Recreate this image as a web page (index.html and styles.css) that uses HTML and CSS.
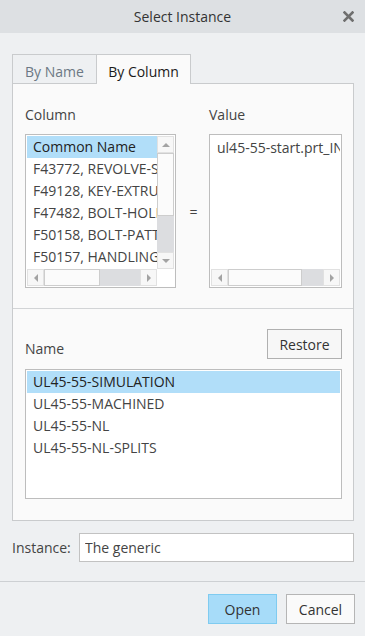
FILE: index.html
```html
<!DOCTYPE html>
<html lang="en">
<head>
  <meta charset="UTF-8">
  <meta name="viewport" content="width=device-width, initial-scale=1.0">
  <title>Select Instance</title>
  <link rel="stylesheet" href="styles.css">
</head>
<body>
  <div class="titlebar">
    <span class="title">Select Instance</span>
    <span class="close">
      <svg width="11" height="11" viewBox="0 0 11 11">
        <path d="M1.5 1.5 L9.5 9.5 M9.5 1.5 L1.5 9.5" stroke="#6f6f6f" stroke-width="2.6" stroke-linecap="square"/>
      </svg>
    </span>
  </div>

  <div class="main">
    <div class="tabs">
      <div class="tab">By Name</div>
      <div class="tab tab-active">By Column</div>
    </div>

    <div class="panel">
      <!-- Column / Value -->
      <div class="cols">
        <div class="label">Column</div>
        <div></div>
        <div class="label">Value</div>

        <div class="listbox scroll-both">
          <ul class="items">
            <li class="item selected">Common Name</li>
            <li class="item">F43772, REVOLVE-SHAFT</li>
            <li class="item">F49128, KEY-EXTRUDE</li>
            <li class="item">F47482, BOLT-HOLE</li>
            <li class="item">F50158, BOLT-PATTERN</li>
            <li class="item">F50157, HANDLING</li>
          </ul>
          <div class="vscroll">
            <div class="arrow"><span class="tri tri-up"></span></div>
            <div class="thumb-v"></div>
            <div class="track"></div>
            <div class="arrow"><span class="tri tri-down"></span></div>
          </div>
          <div class="hscroll">
            <div class="arrow"><span class="tri tri-left"></span></div>
            <div class="thumb-h thumb-col"></div>
            <div class="track"></div>
            <div class="arrow"><span class="tri tri-right"></span></div>
          </div>
          <div class="corner"></div>
        </div>

        <div class="equals">=</div>

        <div class="listbox scroll-h">
          <ul class="items">
            <li class="item value-text">ul45-55-start.prt_INST</li>
          </ul>
          <div class="hscroll">
            <div class="arrow"><span class="tri tri-left"></span></div>
            <div class="thumb-h thumb-val"></div>
            <div class="track"></div>
            <div class="arrow"><span class="tri tri-right"></span></div>
          </div>
        </div>
      </div>

      <!-- Name -->
      <div class="names">
        <div class="names-head">
          <div class="label">Name</div>
          <button class="btn btn-restore" type="button">Restore</button>
        </div>
        <ul class="listbox name-list">
          <li class="item selected">UL45-55-SIMULATION</li>
          <li class="item">UL45-55-MACHINED</li>
          <li class="item">UL45-55-NL</li>
          <li class="item">UL45-55-NL-SPLITS</li>
        </ul>
      </div>
    </div>

    <div class="instance-row">
      <label class="instance-label" for="instance">Instance:</label>
      <input class="instance-input" id="instance" type="text" value="The generic">
    </div>
  </div>

  <div class="footer">
    <button class="btn btn-open" type="button">Open</button>
    <button class="btn" type="button">Cancel</button>
  </div>
</body>
</html>
```

FILE: styles.css
```css
* {
  margin: 0;
  padding: 0;
  box-sizing: border-box;
}
body {
  width: 365px;
  height: 636px;
  overflow: hidden;
  background: #eef0f2;
  font-family: "Open Sans", "Noto Sans", sans-serif;
  font-size: 14px;
  color: #333;
}
ul {
  list-style: none;
}

/* Barra de título */
.titlebar {
  height: 33px;
  background: #dde0e3;
  display: grid;
  grid-template-columns: 1fr auto 1fr;
  align-items: center;
}
.title {
  grid-column: 2;
  color: #333;
}
.close {
  justify-self: end;
  margin-right: 11px;
  display: flex;
}

.main {
  padding: 21px 11px 0 12px;
}

/* Abas */
.tabs {
  display: flex;
  height: 29px;
  position: relative;
  z-index: 1;
}
.tab {
  width: 85px;
  height: 29px;
  border: 1px solid #c9cbcd;
  border-bottom: none;
  background: #eef0f2;
  color: #6c7884;
  display: flex;
  justify-content: center;
  align-items: center;
  padding-top: 4px;
}
.tab-active {
  width: 94px;
  height: 30px;
  border-left: none;
  background: #fafafa;
  color: #1a1a1a;
}

.panel {
  border: 1px solid #c9cbcd;
  background: #fafafa;
  width: 342px;
}
.label {
  line-height: 20px;
  color: #444;
}

/* Coluna / Valor */
.cols {
  display: grid;
  grid-template-columns: 151px 33px 133px;
  grid-template-rows: 20px 154px;
  row-gap: 9px;
  padding: 21px 0 20px 12px;
  border-bottom: 1px solid #d2d4d6;
}
.equals {
  display: flex;
  justify-content: center;
  align-items: center;
  padding-left: 2px;
  color: #444;
}
.listbox {
  border: 1px solid #bdbdbd;
  background: #fff;
  padding: 1px;
}
.scroll-both {
  display: grid;
  grid-template-columns: 1fr 17px;
  grid-template-rows: 1fr 17px;
}
.scroll-h {
  display: grid;
  grid-template-rows: 1fr 17px;
}
.items {
  overflow: hidden;
}
.item {
  height: 22px;
  line-height: 22px;
  padding-left: 6px;
  white-space: nowrap;
  color: #444;
}
.item.selected {
  background: #b1def9;
  color: #222;
}
.value-text {
  padding-left: 6px;
  padding-top: 1px;
}

/* Barras de rolagem */
.vscroll {
  display: flex;
  flex-direction: column;
}
.hscroll {
  display: flex;
}
.arrow {
  flex: 0 0 17px;
  border: 1px solid #e1e1e1;
  background: #f7f7f7;
  display: flex;
  justify-content: center;
  align-items: center;
}
.thumb-v {
  height: 63px;
  border: 1px solid #cdcdcd;
  background: #fbfbfb;
}
.thumb-h {
  border: 1px solid #cdcdcd;
  background: #fbfbfb;
}
.thumb-col {
  width: 56px;
}
.thumb-val {
  width: 74px;
}
.track {
  flex: 1;
  background: #dcdde0;
}
.corner {
  background: #fff;
}
.tri {
  width: 0;
  height: 0;
  border: 4px solid transparent;
}
.tri-up {
  border-top: none;
  border-bottom-color: #a3a3a3;
}
.tri-down {
  border-bottom: none;
  border-top-color: #a3a3a3;
}
.tri-left {
  border-left: none;
  border-right-color: #a3a3a3;
}
.tri-right {
  border-right: none;
  border-left-color: #a3a3a3;
}

/* Nome */
.names {
  padding: 20px 11px 21px 12px;
}
.names-head {
  display: flex;
  justify-content: space-between;
  align-items: flex-end;
}
.name-list {
  margin-top: 10px;
  height: 130px;
}

/* Botões */
.btn {
  width: 69px;
  height: 30px;
  border: 1px solid #b5b5b5;
  background: #fafafa;
  font-family: inherit;
  font-size: 14px;
  color: #333;
}
.btn-restore {
  width: 75px;
  background: #f7f7f7;
  border-color: #b0b0b0;
}
.btn-open {
  background: #a7dcf9;
  border-color: #7fcbf0;
}

/* Instância */
.instance-row {
  display: flex;
  align-items: center;
  margin-top: 12px;
  height: 29px;
}
.instance-label {
  width: 67px;
  color: #444;
}
.instance-input {
  width: 275px;
  height: 29px;
  border: 1px solid #c2c2c2;
  background: #fff;
  padding-left: 5px;
  font-family: inherit;
  font-size: 14px;
  color: #444;
  outline: none;
}

.footer {
  margin-top: 19px;
  border-top: 1px solid #cdd0d3;
  padding: 12px 10px 0 0;
  display: flex;
  justify-content: flex-end;
  gap: 9px;
}
```
